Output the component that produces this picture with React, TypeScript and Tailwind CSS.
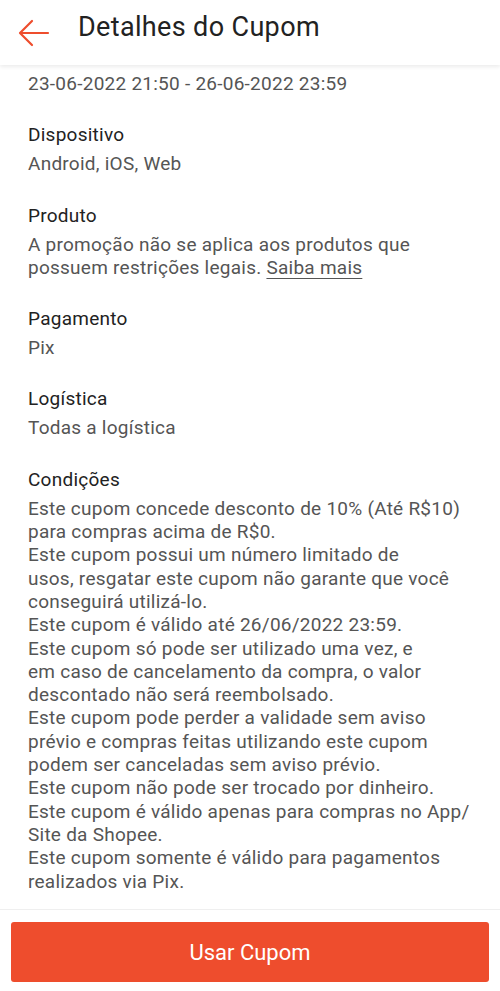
import React from "react";

const Section = ({ label, lines }: { label?: string; lines: React.ReactNode[] }) => (
  <div className="flex flex-col">
    {label && <div className="text-[19px] leading-[23px] tracking-[0.25px] text-[#222222]">{label}</div>}
    <div className={label ? "mt-[6px] flex flex-col" : "flex flex-col"}>
      {lines.map((l, i) => (
        <div key={i} className="whitespace-nowrap text-[19px] leading-[23.3px] tracking-[0.25px] text-[#555555]">
          {l}
        </div>
      ))}
    </div>
  </div>
);

export default function App() {
  return (
    <div
      className="flex h-[991px] w-[500px] flex-col overflow-hidden bg-white"
      style={{ fontFamily: "Roboto, 'Noto Sans', sans-serif" }}
    >
      <header className="relative z-10 flex h-[65px] shrink-0 items-center bg-white shadow-[0_2px_4px_rgba(0,0,0,0.08)]">
        <div className="ml-[18px] flex h-[30px] w-[32px] items-center justify-center">
          <svg width="32" height="28" viewBox="0 0 32 28" fill="none">
            <path d="M30 14H3M14 2L2 14l12 12" stroke="#ee4d2d" strokeWidth="2.2" strokeLinecap="round" strokeLinejoin="round" />
          </svg>
        </div>
        <h1 className="ml-[28px] -mt-[11px] text-[27px] font-normal leading-[30px] tracking-[0.35px] text-[#222222]">Detalhes do Cupom</h1>
      </header>
      <main className="flex flex-1 flex-col gap-[28px] overflow-hidden px-[28px] pt-[7px]">
        <Section lines={["23-06-2022 21:50 - 26-06-2022 23:59"]} />
        <Section label="Dispositivo" lines={["Android, iOS, Web"]} />
        <Section
          label="Produto"
          lines={[
            "A promoção não se aplica aos produtos que",
            <>
              possuem restrições legais. <span className="underline underline-offset-[4px]">Saiba mais</span>
            </>,
          ]}
        />
        <Section label="Pagamento" lines={["Pix"]} />
        <Section label="Logística" lines={["Todas a logística"]} />
        <Section
          label="Condições"
          lines={[
            "Este cupom concede desconto de 10% (Até R$10)",
            "para compras acima de R$0.",
            "Este cupom possui um número limitado de",
            "usos, resgatar este cupom não garante que você",
            "conseguirá utilizá-lo.",
            "Este cupom é válido até 26/06/2022 23:59.",
            "Este cupom só pode ser utilizado uma vez, e",
            "em caso de cancelamento da compra, o valor",
            "descontado não será reembolsado.",
            "Este cupom pode perder a validade sem aviso",
            "prévio e compras feitas utilizando este cupom",
            "podem ser canceladas sem aviso prévio.",
            "Este cupom não pode ser trocado por dinheiro.",
            "Este cupom é válido apenas para compras no App/",
            "Site da Shopee.",
            "Este cupom somente é válido para pagamentos",
            "realizados via Pix.",
          ]}
        />
      </main>
      <footer className="flex h-[82px] shrink-0 flex-col border-t border-[#efefef] bg-white px-[11px] pt-[12px]">
        <button className="flex h-[60px] w-full items-center justify-center rounded-[3px] bg-[#ee4d2d] text-[22px] text-white">
          Usar Cupom
        </button>
      </footer>
    </div>
  );
}
